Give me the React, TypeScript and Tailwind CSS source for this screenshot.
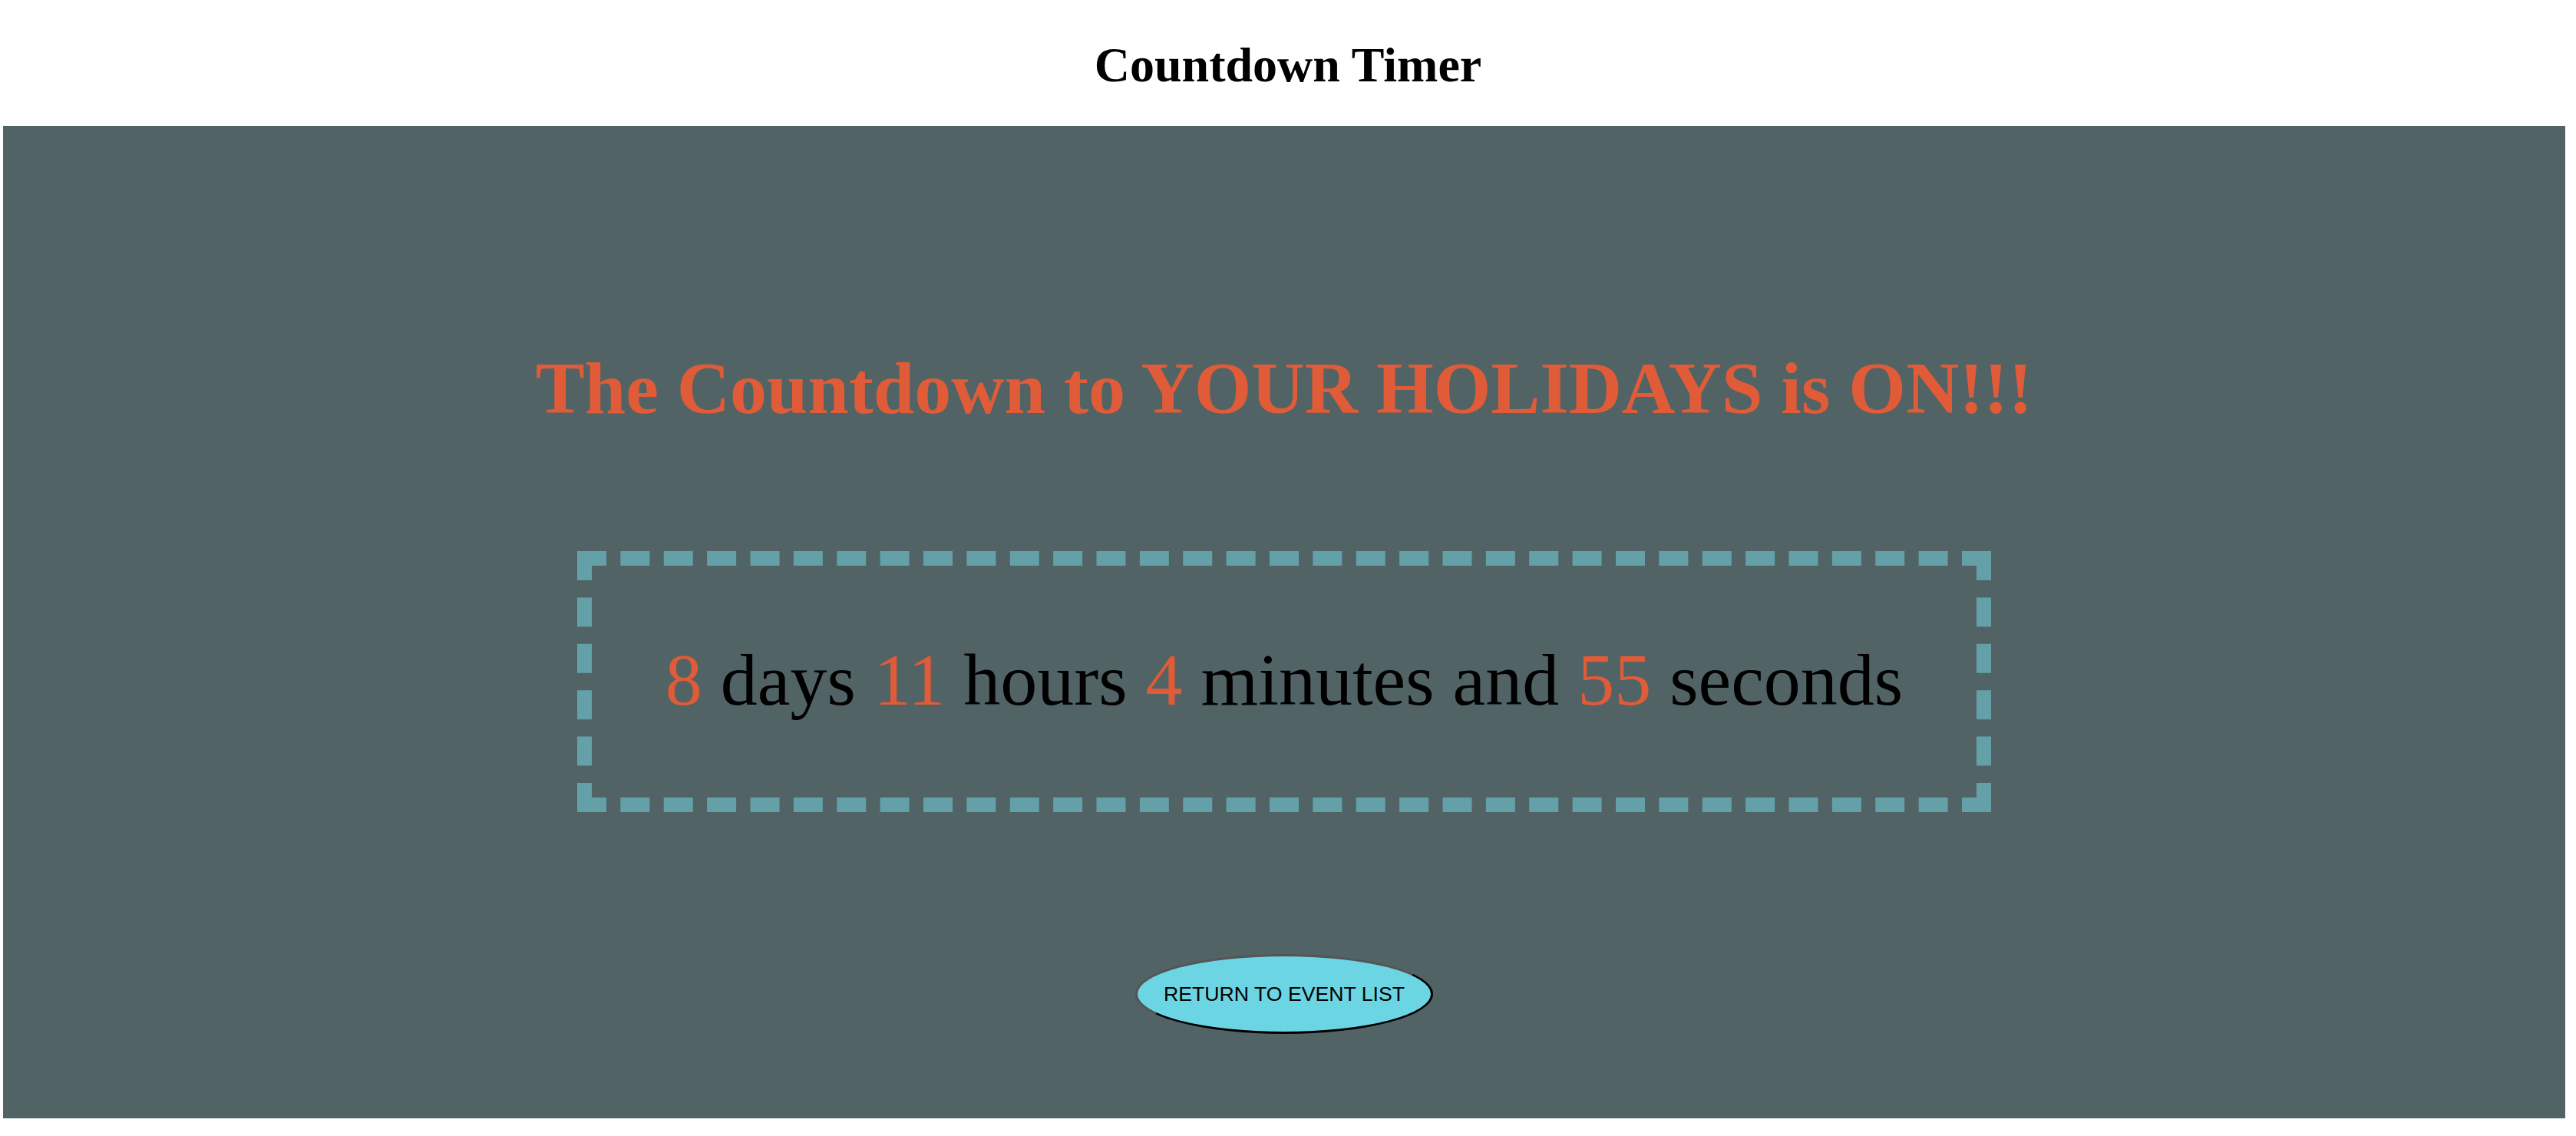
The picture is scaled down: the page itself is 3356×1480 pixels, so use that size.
export default function App() {
  const accent = 'text-[#e05b38]';

  return (
    <div className="min-h-[1480px] bg-white font-['Liberation_Serif','Times_New_Roman',serif]">
      <header className="pt-[48px] pb-[42px] text-center">
        <h1 className="text-[64px] leading-[74px] font-bold text-black">Countdown Timer</h1>
      </header>

      <main className="ml-[4px] w-[3338px] h-[1293px] bg-[#526365] flex flex-col items-center pt-[287px]">
        <h2 className={`text-[96px] leading-[110px] font-bold ${accent}`}>
          The Countdown to YOUR HOLIDAYS is ON!!!
        </h2>

        <div className="mt-[157px] w-[1842px] h-[340px] border-[19px] border-dashed border-[#64a0a8] flex items-center justify-center">
          <p className="text-[96px] leading-[110px] text-black whitespace-nowrap pb-[4px]">
            <span className={accent}>8</span> days <span className={accent}>11</span> hours{' '}
            <span className={accent}>4</span> minutes and <span className={accent}>55</span> seconds
          </p>
        </div>

        <button
          type="button"
          className="mt-[185px] w-[388px] h-[104px] rounded-[50%] bg-[#6bd5e3] border-[3px] border-black [border-style:outset] font-['Liberation_Sans',Arial,sans-serif] text-[26.67px] leading-[31px] text-black"
        >
          RETURN TO EVENT LIST
        </button>
      </main>
    </div>
  );
}
